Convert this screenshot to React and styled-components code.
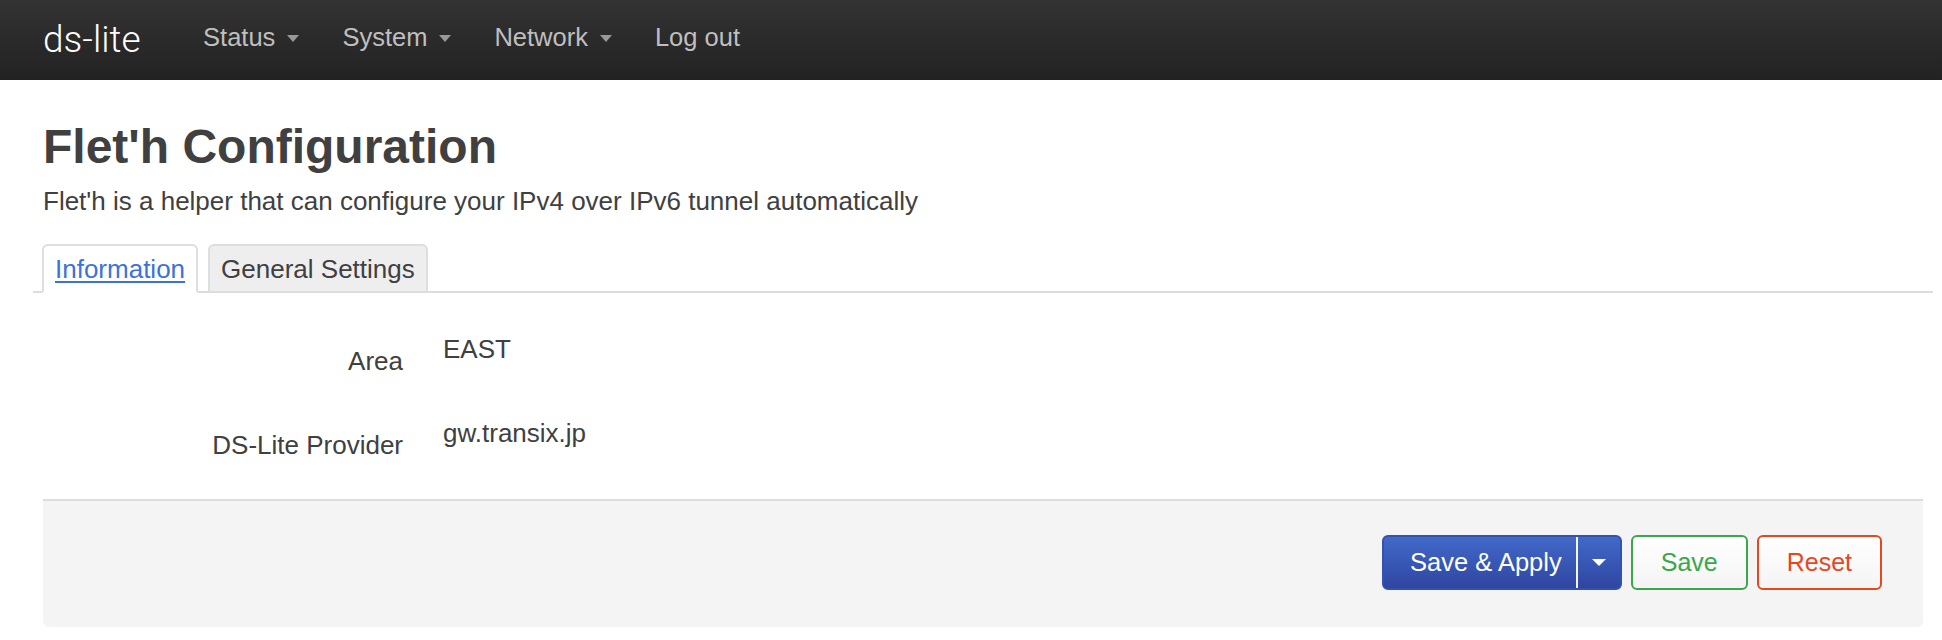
import React from 'react'
import styled, { createGlobalStyle } from 'styled-components'

const GlobalStyle = createGlobalStyle`
  body {
    margin: 0;
    background: #fff;
    color: #404040;
    font-family: "Liberation Sans", Arial, Helvetica, sans-serif;
    font-size: 26px;
    line-height: 36px;
  }
`

const navItems = [
  { label: 'Status', menu: true },
  { label: 'System', menu: true },
  { label: 'Network', menu: true },
  { label: 'Log out', menu: false },
]

const fields = [
  { label: 'Area', value: 'EAST' },
  { label: 'DS-Lite Provider', value: 'gw.transix.jp' },
]

function App() {
  return (
    <>
      <GlobalStyle />
      <TopBar>
        <Brand href="#">ds-lite</Brand>
        <Nav>
          {navItems.map((item) => (
            <NavLink key={item.label} href="#">
              {item.label}
              {item.menu && <NavCaret />}
            </NavLink>
          ))}
        </Nav>
      </TopBar>

      <Main>
        <Title>Flet'h Configuration</Title>
        <Description>
          Flet'h is a helper that can configure your IPv4 over IPv6 tunnel automatically
        </Description>

        <TabBar>
          <Tab active>
            <TabLink href="#" active>Information</TabLink>
          </Tab>
          <Tab>
            <TabLink href="#">General Settings</TabLink>
          </Tab>
        </TabBar>

        <Fields>
          {fields.map((f) => (
            <Row key={f.label}>
              <Label>{f.label}</Label>
              <Value>{f.value}</Value>
            </Row>
          ))}
        </Fields>

        <Actions>
          <SplitButton>
            <SplitMain>Save &amp; Apply</SplitMain>
            <SplitToggle>
              <ButtonCaret />
            </SplitToggle>
          </SplitButton>
          <Button tone="#3ca64c">Save</Button>
          <Button tone="#e4481f">Reset</Button>
        </Actions>
      </Main>
    </>
  )
}

export default App

const TopBar = styled.header`
  height: 80px;
  display: flex;
  padding-left: 43px;
  background-image: linear-gradient(to bottom, #333333, #222222);
`

const Brand = styled.a`
  font-family: Roboto, "Liberation Sans", sans-serif;
  font-weight: 300;
  font-size: 37px;
  line-height: 80px;
  color: #fff;
  text-decoration: none;
  margin-right: 41px;
`

const Nav = styled.nav`
  display: flex;
`

const NavLink = styled.a`
  padding: 0 21.5px;
  font-size: 25.5px;
  line-height: 74px;
  color: #bfbfbf;
  text-decoration: none;
`

const NavCaret = styled.span`
  display: inline-block;
  vertical-align: middle;
  margin-left: 12px;
  margin-top: -2px;
  width: 0;
  height: 0;
  border-left: 6.5px solid transparent;
  border-right: 6.5px solid transparent;
  border-top: 7px solid #999;
`

const Main = styled.main`
  padding: 0 19px 0 43px;
`

const Title = styled.h2`
  margin: 43px 0 0;
  font-size: 48px;
  line-height: 48px;
  font-weight: bold;
  color: #404040;
`

const Description = styled.p`
  margin: 12px 0 0;
`

const TabBar = styled.ul`
  list-style: none;
  display: flex;
  align-items: flex-end;
  gap: 10px;
  margin: 25px -10px 0;
  padding: 0 0 0 9px;
  border-bottom: 2px solid #ddd;
`

const Tab = styled.li`
  margin-bottom: -2px;
  padding: 5px 11px 4px;
  border: 2px solid #dedede;
  border-bottom-color: ${(p) => (p.active ? '#fff' : '#ddd')};
  border-radius: 6px 6px 0 0;
  background: ${(p) => (p.active ? '#fff' : '#eee')};
`

const TabLink = styled.a`
  color: ${(p) => (p.active ? '#3d72d9' : '#404040')};
  text-decoration: ${(p) => (p.active ? 'underline' : 'none')};
  text-underline-offset: 3px;
`

const Fields = styled.div`
  padding: 2px 0 36px;
`

const Row = styled.div`
  display: grid;
  grid-template-columns: 360px 1fr;
  column-gap: 40px;
  padding-top: 36px;
`

const Label = styled.label`
  text-align: right;
  padding-top: 12px;
`

const Value = styled.div``

const Actions = styled.div`
  display: flex;
  justify-content: flex-end;
  gap: 9px;
  padding: 34px 41px 37px;
  background: #f4f4f4;
  border-top: 2px solid #ddd;
  border-radius: 0 0 6px 6px;
`

const SplitButton = styled.div`
  display: flex;
  border: 2px solid #3252b0;
  border-radius: 6px;
  background-image: linear-gradient(to bottom, #4169c9, #2f46a1);
  color: #fff;
  font-size: 25.5px;
  line-height: 30px;
`

const SplitMain = styled.span`
  padding: 10px 14px 11px 26px;
`

const SplitToggle = styled.span`
  width: 42px;
  display: flex;
  align-items: center;
  justify-content: center;
  border-left: 2px solid rgba(255, 255, 255, 0.95);
`

const ButtonCaret = styled.span`
  width: 0;
  height: 0;
  border-left: 7px solid transparent;
  border-right: 7px solid transparent;
  border-top: 7px solid #fff;
`

const Button = styled.button`
  font-family: inherit;
  font-size: 25px;
  line-height: 30px;
  padding: 10px 28px 11px;
  border: 2px solid ${(p) => p.tone};
  border-radius: 6px;
  color: ${(p) => p.tone};
  background-image: linear-gradient(to bottom, #ffffff, #f4f4f4);
  cursor: pointer;
`
